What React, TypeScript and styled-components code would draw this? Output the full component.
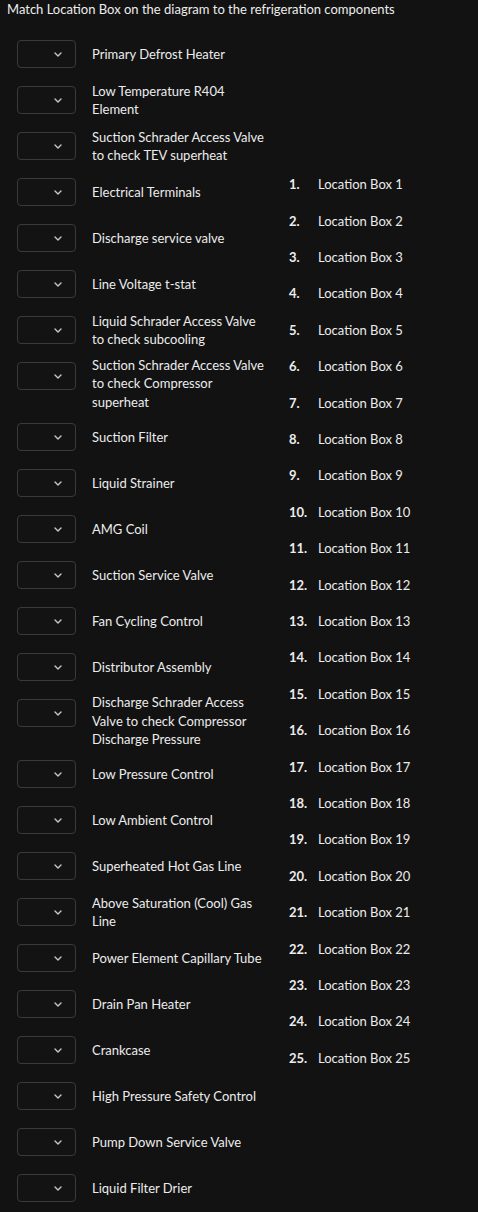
import React from "react";
import styled, { createGlobalStyle } from "styled-components";

const GlobalStyle = createGlobalStyle`
  html, body {
    margin: 0;
    padding: 0;
    background: #121212;
  }
  body {
    font-family: Lato, "Noto Sans", sans-serif;
    color: #ececec;
  }
`;

const Page = styled.div`
  padding: 0 0 4px 0;
`;

const Heading = styled.div`
  padding: 0 7px;
  font-size: 13px;
  line-height: 18px;
  color: #ededed;
`;

const Main = styled.div`
  display: flex;
  align-items: center;
  margin-top: 16px;
  padding-left: 17px;
`;

const LeftColumn = styled.div`
  display: flex;
  flex-direction: column;
  gap: 6px;
`;

const Row = styled.div`
  display: flex;
  align-items: flex-start;
  gap: 16px;
`;

const SelectCell = styled.div`
  height: 40px;
  display: flex;
  align-items: center;
`;

const SelectBox = styled.div`
  position: relative;
  box-sizing: border-box;
  width: 59px;
  height: 28px;
  border: 1px solid #3a3a3a;
  border-radius: 4px;
  background: #131313;
`;

const Chevron = styled.svg`
  position: absolute;
  right: 13px;
  top: 11px;
  width: 8px;
  height: 5px;
`;

const Label = styled.div`
  box-sizing: border-box;
  width: 176px;
  min-height: 40px;
  display: flex;
  align-items: center;
  font-size: 13px;
  line-height: 18.4px;
`;

const RightList = styled.ol`
  list-style: none;
  margin: 0 0 0 21px;
  padding: 0;
`;

const Item = styled.li`
  display: flex;
  align-items: center;
  height: 36.4px;
  font-size: 13px;
  line-height: 18.4px;
`;

const Num = styled.span`
  width: 29px;
  font-weight: 700;
`;

const labels = [
  "Primary Defrost Heater",
  "Low Temperature R404 Element",
  "Suction Schrader Access Valve to check TEV superheat",
  "Electrical Terminals",
  "Discharge service valve",
  "Line Voltage t-stat",
  "Liquid Schrader Access Valve to check subcooling",
  "Suction Schrader Access Valve to check Compressor superheat",
  "Suction Filter",
  "Liquid Strainer",
  "AMG Coil",
  "Suction Service Valve",
  "Fan Cycling Control",
  "Distributor Assembly",
  "Discharge Schrader Access Valve to check Compressor Discharge Pressure",
  "Low Pressure Control",
  "Low Ambient Control",
  "Superheated Hot Gas Line",
  "Above Saturation (Cool) Gas Line",
  "Power Element Capillary Tube",
  "Drain Pan Heater",
  "Crankcase",
  "High Pressure Safety Control",
  "Pump Down Service Valve",
  "Liquid Filter Drier",
];

const Select = () => (
  <SelectCell>
    <SelectBox>
      <Chevron viewBox="0 0 8 5" fill="none">
        <polyline
          points="1,1 4,4 7,1"
          stroke="#c8c8c8"
          strokeWidth="1.4"
          strokeLinecap="round"
          strokeLinejoin="round"
        />
      </Chevron>
    </SelectBox>
  </SelectCell>
);

export default function App() {
  return (
    <Page>
      <GlobalStyle />
      <Heading>Match Location Box on the diagram to the refrigeration components</Heading>
      <Main>
        <LeftColumn>
          {labels.map((l) => (
            <Row key={l}>
              <Select />
              <Label>{l}</Label>
            </Row>
          ))}
        </LeftColumn>
        <RightList>
          {Array.from({ length: 25 }, (_, i) => (
            <Item key={i}>
              <Num>{i + 1}.</Num>
              <span>Location Box {i + 1}</span>
            </Item>
          ))}
        </RightList>
      </Main>
    </Page>
  );
}
